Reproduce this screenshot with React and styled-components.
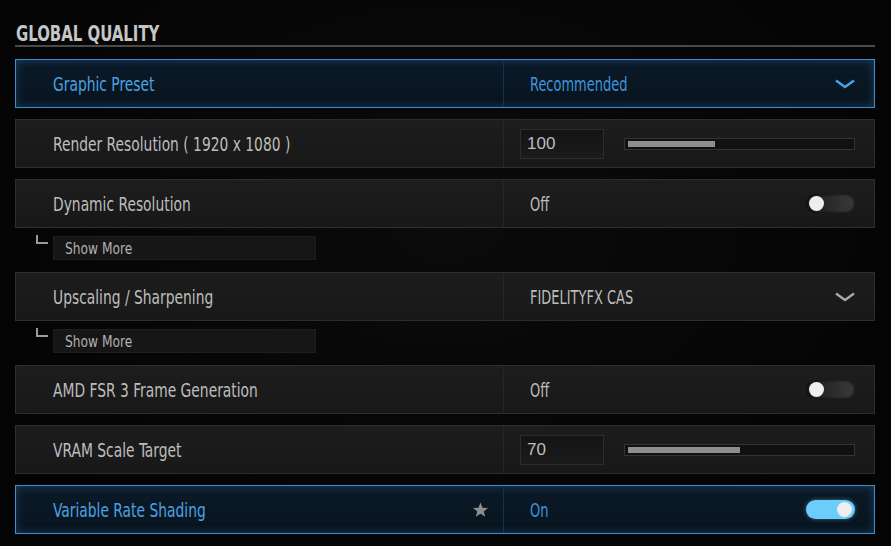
import React from "react";
import styled, { createGlobalStyle, css } from "styled-components";

const Global = createGlobalStyle`
  html, body { margin: 0; padding: 0; background: #050505; }
  body { width: 891px; height: 546px; overflow: hidden; }
`;

const COND = `"DejaVu Sans Condensed", "DejaVu Sans", sans-serif`;

const Page = styled.div`
  width: 891px;
  height: 546px;
  box-sizing: border-box;
  padding: 23px 0 0 15px;
  background: radial-gradient(ellipse at 50% 40%, #0b0b0b 0%, #040404 80%);
  font-family: ${COND};
`;

const Section = styled.section`
  width: 860px;
`;

const Narrow = styled.span`
  display: inline-block;
  white-space: nowrap;
  transform: scaleX(${(p) => p.$scale || 0.81});
  transform-origin: left center;
`;

const Title = styled.h2`
  margin: 0 0 0 1px;
  font-family: "DejaVu Sans Condensed", "DejaVu Sans", sans-serif;
  font-weight: 700;
  font-size: 21px;
  color: #c6c6c6;
  line-height: 22px;
`;

const Rule = styled.div`
  height: 2px;
  background: #4a4a4a;
  margin-bottom: 12px;
`;

const List = styled.div`
  display: flex;
  flex-direction: column;
`;

const Row = styled.div`
  display: grid;
  grid-template-columns: 488px 1fr;
  height: 49px;
  box-sizing: border-box;
  margin-bottom: ${(p) => (p.$tight ? 8 : 11)}px;
  border: 1px solid #2e2e2e;
  background: linear-gradient(180deg, #1d1d1d 0%, #181818 100%);
  ${(p) =>
    p.$active &&
    css`
      border: 1px solid #3d8ccc;
      background: linear-gradient(180deg, #0b1a28 0%, #08141f 100%);
      box-shadow: inset 0 0 8px rgba(60, 140, 210, 0.35);
    `}
`;

const LabelCell = styled.div`
  display: flex;
  align-items: center;
  justify-content: space-between;
  padding: 0 14px 0 37px;
  border-right: 1px solid ${(p) => (p.$active ? "#15324a" : "#262626")};
  font-size: 19px;
  color: ${(p) => (p.$active ? "#4aa2e2" : "#bdbdbd")};
`;

const ValueCell = styled.div`
  display: flex;
  align-items: center;
  justify-content: space-between;
  padding: 0 19px 0 26px;
  font-size: 19px;
  color: ${(p) => (p.$active ? "#3f95dc" : "#bdbdbd")};
`;

const SliderCell = styled.div`
  display: flex;
  align-items: center;
  gap: 20px;
  padding: 0 19px 0 16px;
`;

const NumBox = styled.div`
  width: 84px;
  height: 30px;
  box-sizing: border-box;
  border: 1px solid #2c2c2c;
  background: linear-gradient(180deg, #141414, #1b1b1b);
  font-family: "Liberation Sans", "Arial", sans-serif;
  font-size: 17px;
  color: #bdbdbd;
  display: flex;
  align-items: center;
  padding-left: 6px;
`;

const Track = styled.div`
  flex: 1;
  height: 12px;
  box-sizing: border-box;
  border: 1px solid #333;
  background: #111;
  padding: 2px 3px;
`;

const Fill = styled.div`
  height: 6px;
  background: #8e8e8e;
`;

const Toggle = styled.div`
  width: 49px;
  height: 19px;
  border-radius: 10px;
  box-sizing: border-box;
  display: flex;
  align-items: center;
  padding: 0 3px;
  justify-content: ${(p) => (p.$on ? "flex-end" : "flex-start")};
  background: ${(p) =>
    p.$on ? "#6ccdfb" : "linear-gradient(90deg, #1a1a1a, #3a3a3a)"};
  box-shadow: ${(p) =>
    p.$on ? "0 0 4px rgba(110,200,250,0.5)" : "inset 0 0 3px #000"};
`;

const Knob = styled.div`
  width: 15px;
  height: 15px;
  border-radius: 50%;
  background: #eeeeee;
`;

const SubRow = styled.div`
  display: flex;
  align-items: flex-start;
  height: 24px;
  margin-bottom: 12px;
  padding-left: 21px;
`;

const Corner = styled.div`
  width: 12px;
  height: 9px;
  margin-top: -1px;
  border-left: 2px solid #9a9a9a;
  border-bottom: 2px solid #9a9a9a;
  box-sizing: border-box;
  margin-right: 5px;
`;

const SubButton = styled.div`
  width: 263px;
  height: 24px;
  box-sizing: border-box;
  background: #161616;
  border: 1px solid #1e1e1e;
  display: flex;
  align-items: center;
  padding-left: 11px;
  font-size: 16px;
  color: #b0b0b0;
`;

const Chevron = ({ color }) => (
  <svg width="20" height="10" viewBox="0 0 20 10">
    <path d="M1 1.5 L10 8 L19 1.5" fill="none" stroke={color} strokeWidth="2.4" />
  </svg>
);

const Star = () => (
  <svg width="17" height="16" viewBox="0 0 24 23">
    <path
      d="M12 0.8 L14.9 8.1 L22.9 8.5 L16.7 13.5 L18.8 21.3 L12 16.9 L5.2 21.3 L7.3 13.5 L1.1 8.5 L9.1 8.1 Z"
      fill="#8d8d8d"
    />
  </svg>
);

function Setting({ label, active, tight, star, children }) {
  return (
    <Row $active={active} $tight={tight}>
      <LabelCell $active={active}>
        <Narrow>{label}</Narrow>
        {star && <Star />}
      </LabelCell>
      {children}
    </Row>
  );
}

function ShowMore() {
  return (
    <SubRow>
      <Corner />
      <SubButton>
        <Narrow $scale={0.85}>Show More</Narrow>
      </SubButton>
    </SubRow>
  );
}

function Value({ active, text, children }) {
  return (
    <ValueCell $active={active}>
      <Narrow $scale={0.76}>{text}</Narrow>
      {children}
    </ValueCell>
  );
}

export default function App() {
  return (
    <>
      <Global />
      <Page>
        <Section>
          <Title>
            <Narrow $scale={0.79}>GLOBAL QUALITY</Narrow>
          </Title>
          <Rule />
          <List>
            <Setting label="Graphic Preset" active>
              <Value active text="Recommended">
                <Chevron color="#4aa2e2" />
              </Value>
            </Setting>
            <Setting label="Render Resolution ( 1920 x 1080 )">
              <SliderCell>
                <NumBox>100</NumBox>
                <Track>
                  <Fill style={{ width: "39%" }} />
                </Track>
              </SliderCell>
            </Setting>
            <Setting label="Dynamic Resolution" tight>
              <Value text="Off">
                <Toggle>
                  <Knob />
                </Toggle>
              </Value>
            </Setting>
            <ShowMore />
            <Setting label="Upscaling / Sharpening" tight>
              <Value text="FIDELITYFX CAS">
                <Chevron color="#a8a8a8" />
              </Value>
            </Setting>
            <ShowMore />
            <Setting label="AMD FSR 3 Frame Generation">
              <Value text="Off">
                <Toggle>
                  <Knob />
                </Toggle>
              </Value>
            </Setting>
            <Setting label="VRAM Scale Target">
              <SliderCell>
                <NumBox>70</NumBox>
                <Track>
                  <Fill style={{ width: "50%" }} />
                </Track>
              </SliderCell>
            </Setting>
            <Setting label="Variable Rate Shading" active star>
              <Value active text="On">
                <Toggle $on>
                  <Knob />
                </Toggle>
              </Value>
            </Setting>
          </List>
        </Section>
      </Page>
    </>
  );
}
